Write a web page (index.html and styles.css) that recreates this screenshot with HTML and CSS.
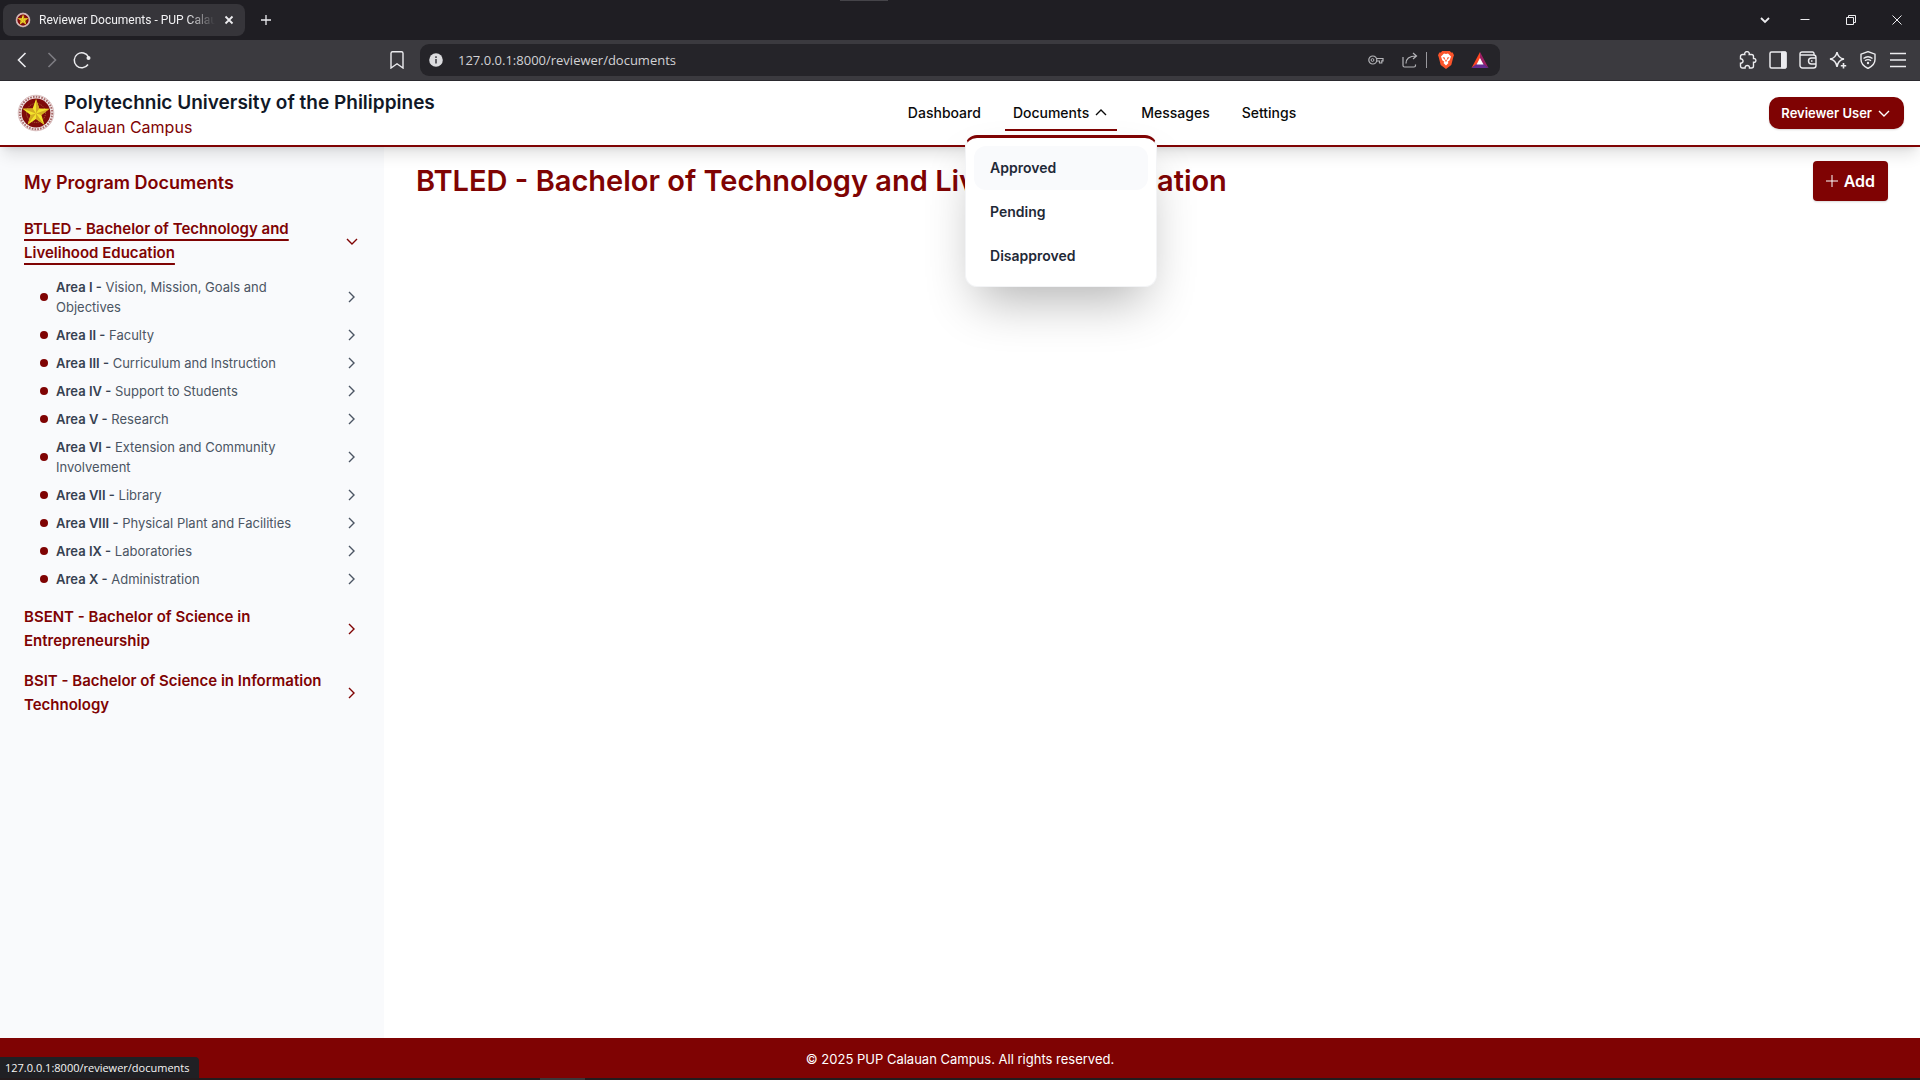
FILE: index.html
```
<!DOCTYPE html>
<html lang="en">
<head>
<meta charset="utf-8">
<meta name="viewport" content="width=device-width, initial-scale=1">
<title>Reviewer Documents - PUP Calauan</title>
<link rel="stylesheet" href="styles.css">
</head>
<body>
<svg class="defs" aria-hidden="true">
  <symbol id="right" viewBox="0 0 16 16"><path d="M5 3l5 5-5 5"/></symbol>
  <symbol id="down" viewBox="0 0 16 16"><path d="M3 6l5 5 5-5"/></symbol>
  <symbol id="seal" viewBox="0 0 40 40">
    <circle cx="20" cy="20" r="18" fill="#f3eaea"/>
    <circle cx="20" cy="20" r="16.200" fill="none" stroke="#a86a6a" stroke-width="2" stroke-dasharray="1.6 1.2"/>
    <circle cx="20" cy="20" r="17.800" fill="none" stroke="#c9a5a5" stroke-width=".6"/>
    <circle cx="20" cy="20" r="14.400" fill="#7f0a0a"/>
    <circle cx="20" cy="20" r="9.500" fill="none" stroke="#b98a45" stroke-width=".7" stroke-dasharray="1 1"/>
    <path d="M20 6l3.300 9.600 10.200.2-8.100 6.200 3 9.800-8.400-5.900-8.400 5.900 3-9.800-8.100-6.200 10.200-.2z" fill="#f3e32c"/>
    <path d="M20 6v14.500l3.300-4.900zM33.500 15.800L20 20.500l5.400 1.500zM28.400 31.800L20 20.500v5.400zM11.600 31.800L20 20.500 14.600 22zM6.500 15.800L20 20.500l-3.300-4.900z" fill="#d3ab22"/>
  </symbol>
</svg>

<div class="tabstrip">
  <div class="tab">
    <svg class="tab-seal filled"><use href="#seal"/></svg>
    <span class="tab-title">Reviewer Documents - PUP Calauan</span>
    <button class="chrome-btn tab-close" aria-label="Close tab"><svg class="i10" viewBox="0 0 10 10"><path d="M1.500 1.500l7 7M8.500 1.500l-7 7" stroke-width="1.800"/></svg></button>
  </div>
  <button class="chrome-btn new-tab" aria-label="New tab"><svg class="i10" viewBox="0 0 10 10"><path d="M5 0v10M0 5h10" stroke-width="1.300"/></svg></button>
  <div class="screen-handle"></div>
  <div class="window-controls">
    <button class="chrome-btn" aria-label="Search tabs"><svg class="i10" viewBox="0 0 10 10"><path d="M1 3l4 4 4-4" stroke-width="1.800"/></svg></button>
    <button class="chrome-btn" aria-label="Minimize"><svg class="i10" viewBox="0 0 10 10"><path d="M.5 4.500h9"/></svg></button>
    <button class="chrome-btn" aria-label="Restore"><svg class="i10" viewBox="0 0 10 10"><path d="M.5 2.500h7v7h-7zM2.500 2V.5h7v7H8"/></svg></button>
    <button class="chrome-btn" aria-label="Close window"><svg class="i10" viewBox="0 0 10 10"><path d="M.5.5l9 9M9.500.5l-9 9"/></svg></button>
  </div>
</div>

<div class="toolbar">
  <div class="toolbar-left">
    <button class="chrome-btn" aria-label="Back"><svg class="i18" viewBox="0 0 18 18"><path d="M12.500 2L5.500 9l7 7" stroke-width="1.600"/></svg></button>
    <button class="chrome-btn dim" aria-label="Forward"><svg class="i18" viewBox="0 0 18 18"><path d="M5.500 2l7 7-7 7" stroke-width="1.600"/></svg></button>
    <button class="chrome-btn" aria-label="Reload"><svg class="i18" viewBox="0 0 18 18"><path d="M15 13.500A7.500 7.500 0 1 1 15.500 6" stroke-width="1.500"/><circle cx="15.500" cy="7" r="2" fill="currentColor" stroke="none"/></svg></button>
    <button class="chrome-btn bookmark" aria-label="Bookmark"><svg class="i18" viewBox="0 0 18 18"><path d="M3 2.200A1.500 1.500 0 0 1 4.500.8h9A1.500 1.500 0 0 1 15 2.200V17l-6-4.200L3 17z" stroke-width="1.400"/></svg></button>
  </div>
  <div class="address">
    <svg class="i14" viewBox="0 0 14 14"><circle cx="7" cy="7" r="6.800" fill="#dcdcdf" stroke="none"/><path d="M7 6v4.500M7 3.200V5" stroke="#55545a" stroke-width="1.800"/></svg>
    <input class="url" type="text" aria-label="Address" value="127.0.0.1:8000/reviewer/documents">
    <button class="chrome-btn soft" aria-label="Passwords"><svg class="i16" viewBox="0 0 16 16"><circle cx="4.800" cy="8" r="4" stroke-width="1.200"/><circle cx="4.500" cy="8" r="1.400"/><path d="M8.500 6.500H15v2.300h-1.200V11h-2.300V9H8.600" stroke-width="1.200"/></svg></button>
    <button class="chrome-btn soft" aria-label="Share"><svg class="i16" viewBox="0 0 16 16"><path d="M1 5v8.500A1.500 1.500 0 0 0 2.500 15H12a1.500 1.500 0 0 0 1.500-1.500V12.500M4 11.500C4 7 7 4 14 4M11 1l3.500 3-3.500 3" stroke-width="1.200"/></svg></button>
    <span class="divider"></span>
    <button class="chrome-btn" aria-label="Brave Shields"><svg class="i18 filled" viewBox="0 0 18 18"><path d="M5.200 0h7.600l1.400 1.500h1.500L17 4.200l-.6 1.600L14.300 14 9 18l-5.300-4L1.600 5.800 1 4.200l1.300-2.700h1.500z" fill="#fb542b"/><path d="M9 3l2-.4L14 5.500l-1.300 3.800-2 1.500L11.500 12 9 14.500 6.500 12l.8-1.200-2-1.500L4 5.500l3-2.900z" fill="#fff"/><path d="M5.500 6l2.500.8L7.600 9zM12.500 6L10 6.800l.4 2.200zM9 8l1 2-1 .8L8 10z" fill="#fb542b"/></svg></button>
    <button class="chrome-btn" aria-label="Rewards"><svg class="i18 filled" viewBox="0 0 18 18"><path d="M9 1L.5 17 9 11z" fill="#ff4724"/><path d="M9 1l8.500 16L9 11z" fill="#9e1f63"/><path d="M.5 17h17L9 10z" fill="#662d91"/><path d="M9 7l3.500 6.500h-7z" fill="#fff"/></svg></button>
  </div>
  <div class="toolbar-right">
    <button class="chrome-btn" aria-label="Extensions"><svg class="i18" viewBox="0 0 18 18"><path d="M3.500 3.500h2.300c-1-3.800 5.400-3.800 4.400 0h2.300a2 2 0 0 1 2 2v2c3.200-.6 3.200 4.400 0 3.800v3.700a2 2 0 0 1-2 2h-2c.2-3.400-4.600-3.400-4.400 0H3.500a2 2 0 0 1-2-2v-2.800c3.400.2 3.400-4.600 0-4.400V5.500a2 2 0 0 1 2-2z" stroke-width="1.400"/></svg></button>
    <button class="chrome-btn" aria-label="Sidebar"><svg class="i18" viewBox="0 0 18 18"><rect x="1" y="1" width="16" height="16" rx="1.500" stroke-width="1.500"/><path d="M12.500 1H17v16h-4.500z" fill="currentColor"/></svg></button>
    <button class="chrome-btn" aria-label="Wallet"><svg class="i18" viewBox="0 0 18 18"><path d="M15 4V2.500A1.500 1.500 0 0 0 13.500 1H3a2 2 0 0 0-2 2v11.500A2.500 2.500 0 0 0 3.500 17h11a2.500 2.500 0 0 0 2.500-2.500V6.500A2.500 2.500 0 0 0 14.500 4H1M17 7h-4.500a3 3 0 0 0 0 6H17zM12 10h1.500" stroke-width="1.400"/></svg></button>
    <button class="chrome-btn" aria-label="Leo AI"><svg class="i18" viewBox="0 0 18 18"><path d="M8 1q1 6 7 7-6 1-7 8-1-7-7-8 6-1 7-7z" stroke-width="1.500"/><path d="M14.500 12v5.500M11.800 14.800h5.400" stroke-width="1.600"/></svg></button>
    <button class="chrome-btn" aria-label="VPN"><svg class="i18" viewBox="0 0 18 18"><path d="M9 .6l7 2.600v5.300c0 4-3 7-7 9-4-2-7-5-7-9V3.200z" stroke-width="1.400"/><path d="M4.500 7.500Q9 4 13.500 7.500M6 9.800q3-2.300 6 0" stroke-width="1.400"/><circle cx="9" cy="12" r="1.200" fill="currentColor" stroke="none"/></svg></button>
    <button class="chrome-btn" aria-label="Menu"><svg class="i18" viewBox="0 0 18 18"><path d="M1 2.500h16M1 9h16M1 15.500h16" stroke-width="1.500"/></svg></button>
  </div>
</div>

<header class="header">
  <a class="brand" href="#">
    <svg class="logo filled"><use href="#seal"/></svg>
    <span class="brand-text">
      <span class="brand-name">Polytechnic University of the Philippines</span>
      <span class="brand-campus">Calauan Campus</span>
    </span>
  </a>
  <nav class="nav">
    <a class="nav-link" href="#">Dashboard</a>
    <div class="nav-group">
      <a class="nav-link active" href="#">Documents <svg class="chev flip"><use href="#down"/></svg></a>
      <div class="dropdown">
        <a class="dropdown-item hover" href="#">Approved</a>
        <a class="dropdown-item" href="#">Pending</a>
        <a class="dropdown-item" href="#">Disapproved</a>
      </div>
    </div>
    <a class="nav-link" href="#">Messages</a>
    <a class="nav-link" href="#">Settings</a>
  </nav>
  <button class="user">Reviewer User <svg class="chev"><use href="#down"/></svg></button>
</header>

<div class="layout">
  <aside class="sidebar">
    <h2 class="sidebar-title">My Program Documents</h2>
    <button class="program"><span class="program-name open">BTLED - Bachelor of Technology and Livelihood Education</span><svg class="chev"><use href="#down"/></svg></button>
    <ul class="areas">
      <li><a class="area" href="#"><span class="area-name"><b>Area I -</b> Vision, Mission, Goals and Objectives</span><svg class="chev"><use href="#right"/></svg></a></li>
      <li><a class="area" href="#"><span class="area-name"><b>Area II -</b> Faculty</span><svg class="chev"><use href="#right"/></svg></a></li>
      <li><a class="area" href="#"><span class="area-name"><b>Area III -</b> Curriculum and Instruction</span><svg class="chev"><use href="#right"/></svg></a></li>
      <li><a class="area" href="#"><span class="area-name"><b>Area IV -</b> Support to Students</span><svg class="chev"><use href="#right"/></svg></a></li>
      <li><a class="area" href="#"><span class="area-name"><b>Area V -</b> Research</span><svg class="chev"><use href="#right"/></svg></a></li>
      <li><a class="area" href="#"><span class="area-name"><b>Area VI -</b> Extension and Community Involvement</span><svg class="chev"><use href="#right"/></svg></a></li>
      <li><a class="area" href="#"><span class="area-name"><b>Area VII -</b> Library</span><svg class="chev"><use href="#right"/></svg></a></li>
      <li><a class="area" href="#"><span class="area-name"><b>Area VIII -</b> Physical Plant and Facilities</span><svg class="chev"><use href="#right"/></svg></a></li>
      <li><a class="area" href="#"><span class="area-name"><b>Area IX -</b> Laboratories</span><svg class="chev"><use href="#right"/></svg></a></li>
      <li><a class="area" href="#"><span class="area-name"><b>Area X -</b> Administration</span><svg class="chev"><use href="#right"/></svg></a></li>
    </ul>
    <button class="program"><span class="program-name">BSENT - Bachelor of Science in Entrepreneurship</span><svg class="chev"><use href="#right"/></svg></button>
    <button class="program"><span class="program-name">BSIT - Bachelor of Science in Information Technology</span><svg class="chev"><use href="#right"/></svg></button>
  </aside>
  <main class="main">
    <h1 class="page-title">BTLED - Bachelor of Technology and Livelihood Education</h1>
    <button class="add"><svg class="plus" viewBox="0 0 12 12"><path d="M6 0v12M0 6h12"/></svg>Add</button>
  </main>
</div>

<footer class="footer">© 2025 PUP Calauan Campus. All rights reserved.
  <div class="status">127.0.0.1:8000/reviewer/documents</div>
</footer>
<div class="taskbar"><div class="taskbar-item"></div></div>
</body>
</html>
```
FILE: styles.css
```
*, *::before, *::after { box-sizing: border-box; }

:root {
  --maroon: #7f0303;
  --ui: Inter, "Liberation Sans", sans-serif;
  --chrome: "Open Sans", "Noto Sans", sans-serif;
}

body {
  margin: 0;
  min-height: 100vh;
  display: flex;
  flex-direction: column;
  font: 13px/20px var(--ui);
  background: #fff;
  color: #111827;
}

a { color: inherit; text-decoration: none; }
button { font: inherit; color: inherit; border: 0; background: none; padding: 0; }
svg { display: block; flex: none; fill: none; stroke: currentColor; }
.filled { stroke: none; }
.defs { position: absolute; width: 0; height: 0; }
.chev { width: 16px; height: 16px; stroke-width: 1.4; }
.flip { transform: rotate(180deg); }

/* browser chrome */
.chrome-btn { display: grid; place-items: center; color: #ececef; }
.i10 { width: 10px; height: 10px; }
.i14 { width: 14px; height: 14px; }
.i16 { width: 16px; height: 16px; }
.i18 { width: 18px; height: 18px; }
.dim { color: #7d7c82; }
.soft { color: #b4b4b8; }

.tabstrip {
  position: relative;
  display: flex;
  align-items: center;
  height: 40px;
  padding: 0 0 0 3px;
  background: #1f1e23;
}
.tab {
  display: flex;
  align-items: center;
  gap: 8px;
  width: 242px;
  height: 32px;
  padding: 0 10px 0 12px;
  border-radius: 8px;
  background: #36353a;
}
.tab-seal { width: 16px; height: 16px; }
.tab-title {
  flex: 1;
  overflow: hidden;
  white-space: nowrap;
  font: 12px/16px Roboto, sans-serif;
  color: #f2f2f4;
  mask-image: linear-gradient(to right, #000 84%, transparent);
}
.tab-close { width: 12px; }
.new-tab { width: 42px; height: 32px; }
.screen-handle {
  position: absolute;
  top: 0;
  left: 840px;
  width: 48px;
  height: 1px;
  background: #454449;
}
.window-controls {
  display: grid;
  grid-template-columns: 34px 46px 46px 46px;
  margin-left: auto;
}

.toolbar {
  display: grid;
  grid-template-columns: 1fr minmax(0, 1080px) 1fr;
  align-items: center;
  height: 41px;
  background: #3b3a3f;
  border-bottom: 1px solid #2b2a2f;
}
.toolbar-left { display: flex; gap: 12px; padding: 0 14px 0 13px; }
.bookmark { margin-left: auto; }
.toolbar-right { display: flex; justify-content: flex-end; gap: 12px; padding-right: 13px; }
.address {
  display: flex;
  align-items: center;
  height: 32px;
  padding: 0 11px 0 9px;
  border-radius: 9px;
  background: #252429;
}
.url {
  flex: 1;
  min-width: 0;
  margin: 0 16px 0 15px;
  padding: 0;
  border: 0;
  outline: 0;
  background: none;
  color: #d2d2d5;
  font: 13px/20px var(--chrome);
}
.address .soft + .soft { margin-left: 18px; }
.divider { width: 1px; height: 16px; margin: 0 10px 0 8px; background: #9a999e; }
.divider + .chrome-btn { margin-right: 16px; }

/* site header */
.header {
  position: relative;
  z-index: 2;
  display: flex;
  align-items: center;
  justify-content: space-between;
  height: 66px;
  padding: 0 16px;
  background: #fff;
  border-bottom: 2px solid var(--maroon);
  box-shadow: 0 10px 15px -3px rgb(0 0 0 / .12), 0 4px 6px -4px rgb(0 0 0 / .12);
}
.brand { display: flex; align-items: center; gap: 8px; }
.logo { width: 40px; height: 40px; }
.brand-text { display: grid; padding-top: 4px; }
.brand-name { font-size: 19px; line-height: 24px; font-weight: 600; }
.brand-campus { font-size: 16px; line-height: 24px; color: var(--maroon); }

.nav { display: flex; gap: 16px; }
.nav-group { position: relative; }
.nav-link {
  display: flex;
  align-items: center;
  gap: 4px;
  height: 36px;
  padding: 0 8px;
  font-size: 14px;
  font-weight: 500;
  color: #0a0a0a;
  border-bottom: 2px solid transparent;
  border-top: 2px solid transparent;
}
.active { border-bottom-color: var(--maroon); }
.dropdown {
  position: absolute;
  top: 40px;
  left: 50%;
  width: 192px;
  margin-left: -96px;
  padding: 8px;
  background: #fff;
  border: 1px solid #f3f4f6;
  border-top: 3px solid var(--maroon);
  border-radius: 12px;
  box-shadow: 0 25px 50px -12px rgb(0 0 0 / .3);
}
.dropdown-item {
  display: block;
  padding: 12px 16px;
  border-radius: 12px;
  font-size: 14px;
  font-weight: 600;
  color: #1f2937;
}
.hover { background: #f9fafc; }
.user {
  display: flex;
  align-items: center;
  gap: 4px;
  height: 32px;
  padding: 0 12px;
  border-radius: 10px;
  background: var(--maroon);
  color: #fff;
  font-weight: 600;
  box-shadow: 0 1px 2px rgb(0 0 0 / .15);
}

/* page */
.layout { flex: 1; display: flex; }
.sidebar { width: 384px; flex: none; padding: 24px; background: #f9fafc; }
.sidebar-title {
  margin: 0 0 14px;
  font-size: 18px;
  line-height: 24px;
  font-weight: 600;
  color: var(--maroon);
}
.program {
  display: flex;
  align-items: center;
  justify-content: space-between;
  gap: 4px;
  width: 100%;
  padding: 8px 0;
  font-size: 15px;
  line-height: 24px;
  font-weight: 600;
  text-align: left;
  color: var(--maroon);
}
.open {
  text-decoration: underline;
  text-decoration-thickness: 2px;
  text-underline-offset: 5px;
  text-decoration-skip-ink: none;
}
.areas { list-style: none; margin: 0 0 4px; padding: 0 0 0 16px; }
.area { display: flex; align-items: center; gap: 8px; padding: 4px 0; color: #4b5563; }
.area::before {
  content: "";
  width: 8px;
  height: 8px;
  flex: none;
  border-radius: 50%;
  background: var(--maroon);
}
.area-name { flex: 1; padding-right: 16px; }
.area-name b { font-weight: 600; color: #374151; }

.main {
  flex: 1;
  display: flex;
  align-items: flex-start;
  justify-content: space-between;
  padding: 14px 32px;
}
.page-title {
  margin: 0;
  font-size: 29px;
  line-height: 40px;
  font-weight: 600;
  color: var(--maroon);
}
.add {
  display: flex;
  align-items: center;
  gap: 6px;
  height: 40px;
  padding: 0 13px;
  border-radius: 4px;
  background: var(--maroon);
  color: #fff;
  font-size: 16px;
  font-weight: 600;
  box-shadow: 0 1px 2px rgb(0 0 0 / .15);
}
.plus { width: 12px; height: 12px; }

.footer {
  position: relative;
  padding: 11px 16px 9px;
  background: var(--maroon);
  color: #fff;
  text-align: center;
}
.status {
  position: absolute;
  left: 0;
  bottom: 0;
  padding: 3px 10px 2px 5px;
  border-top-right-radius: 4px;
  background: #202024;
  color: #f5f5f5;
  font: 11px/16px var(--chrome);
}
.taskbar { height: 2px; padding-left: 540px; background: #231b1d; }
.taskbar-item { width: 45px; height: 2px; background: #3d3638; }
```
